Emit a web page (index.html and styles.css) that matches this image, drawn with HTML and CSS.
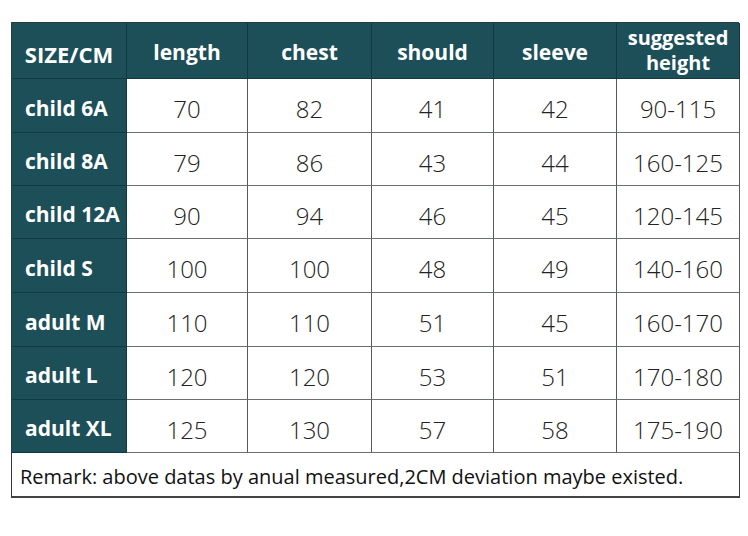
FILE: index.html
```html
<!DOCTYPE html>
<html>
<head>
<meta charset="utf-8">
<link rel="stylesheet" href="styles.css">
</head>
<body>
<div class="chart">
  <div class="grid">
    <div class="cell head">SIZE/CM</div>
    <div class="cell head">length</div>
    <div class="cell head">chest</div>
    <div class="cell head">should</div>
    <div class="cell head">sleeve</div>
    <div class="cell head two">suggested<br>height</div>

    <div class="cell label">child 6A</div>
    <div class="cell num">70</div><div class="cell num">82</div><div class="cell num">41</div><div class="cell num">42</div><div class="cell num">90-115</div>

    <div class="cell label">child 8A</div>
    <div class="cell num">79</div><div class="cell num">86</div><div class="cell num">43</div><div class="cell num">44</div><div class="cell num">160-125</div>

    <div class="cell label">child 12A</div>
    <div class="cell num">90</div><div class="cell num">94</div><div class="cell num">46</div><div class="cell num">45</div><div class="cell num">120-145</div>

    <div class="cell label">child S</div>
    <div class="cell num">100</div><div class="cell num">100</div><div class="cell num">48</div><div class="cell num">49</div><div class="cell num">140-160</div>

    <div class="cell label">adult M</div>
    <div class="cell num">110</div><div class="cell num">110</div><div class="cell num">51</div><div class="cell num">45</div><div class="cell num">160-170</div>

    <div class="cell label">adult L</div>
    <div class="cell num">120</div><div class="cell num">120</div><div class="cell num">53</div><div class="cell num">51</div><div class="cell num">170-180</div>

    <div class="cell label">adult XL</div>
    <div class="cell num">125</div><div class="cell num">130</div><div class="cell num">57</div><div class="cell num">58</div><div class="cell num">175-190</div>

    <div class="cell remark">Remark: above datas by anual measured,2CM deviation maybe existed.</div>
  </div>
</div>
</body>
</html>
```

FILE: styles.css
```css
html, body {
  margin: 0;
  padding: 0;
  background: #ffffff;
}

.chart {
  padding: 22px 0 0 11px;
}

.grid {
  display: grid;
  grid-template-columns: 115px 121px 124px 122px 123px 123px;
  grid-template-rows: 56px 54px 53px 53px 54px 54px 53px 53px 45px;
  width: 728px;
  box-sizing: border-box;
  border-left: 1px solid #2e3a3d;
  border-top: 1px solid #2e3a3d;
  font-family: "Open Sans", "Liberation Sans", sans-serif;
}

.cell {
  box-sizing: border-box;
  border-right: 1px solid #555a5c;
  border-bottom: 1px solid #6b6f70;
  display: flex;
  align-items: center;
  justify-content: center;
}

.head {
  background: #1d4f59;
  color: #ffffff;
  font-weight: 700;
  font-size: 21px;
  border-right-color: #103a42;
  border-bottom-color: #103a42;
  padding-top: 2px;
}

.head:first-child {
  font-size: 22px;
  padding-top: 6px;
}

.two {
  flex-direction: column;
  line-height: 25px;
  text-align: center;
  font-size: 20px;
  padding-top: 0;
  padding-bottom: 2px;
}

.label {
  background: #1d4f59;
  color: #ffffff;
  font-weight: 700;
  font-size: 21px;
  justify-content: flex-start;
  padding-left: 13px;
  padding-top: 4px;
  border-right-color: #103a42;
  border-bottom-color: #103a42;
}

.num {
  color: #222222;
  font-weight: 300;
  font-size: 24px;
  padding-top: 6px;
}

.remark {
  grid-column: 1 / -1;
  justify-content: flex-start;
  padding-left: 8px;
  padding-top: 4px;
  font-size: 20px;
  color: #111111;
  border-right-color: #3a3a3a;
  border-bottom: 2px solid #444444;
}
```
